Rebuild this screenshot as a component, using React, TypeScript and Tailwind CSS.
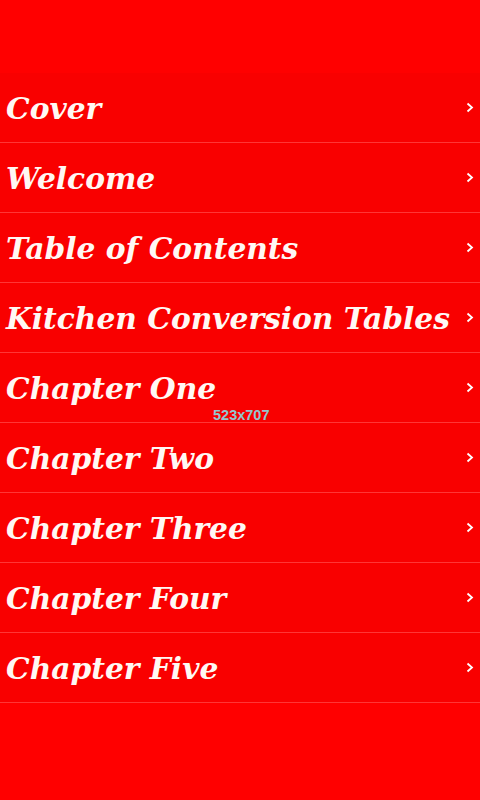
const chapters = [
  "Cover",
  "Welcome",
  "Table of Contents",
  "Kitchen Conversion Tables",
  "Chapter One",
  "Chapter Two",
  "Chapter Three",
  "Chapter Four",
  "Chapter Five",
];

function Chevron() {
  return (
    <svg width="8" height="11" viewBox="0 0 8 11" className="shrink-0">
      <path d="M1.5 1.5 L6 5.5 L1.5 9.5" fill="none" stroke="#ffffff" strokeWidth="1.8" />
    </svg>
  );
}

export default function App() {
  return (
    <div className="relative h-[800px] w-[480px] overflow-hidden bg-[#ff0000]">
      <div className="h-[73px]" />
      <ul className="bg-[#f90000]">
        {chapters.map((title) => (
          <li
            key={title}
            className="flex h-[70px] items-center justify-between border-b border-[#ff3636] pl-[6px] pr-[6px]"
          >
            <span
              className="whitespace-nowrap pt-[3px] text-[29.7px] font-bold italic text-[#fff8f4]"
              style={{ fontFamily: '"DejaVu Serif", "Liberation Serif", serif' }}
            >
              {title}
            </span>
            <Chevron />
          </li>
        ))}
      </ul>
      <div
        className="absolute left-[213px] top-[408px] text-[14.5px] font-bold leading-none text-[#92c6cf]"
        style={{ fontFamily: '"Liberation Sans", Arial, sans-serif' }}
      >
        523x707
      </div>
    </div>
  );
}
